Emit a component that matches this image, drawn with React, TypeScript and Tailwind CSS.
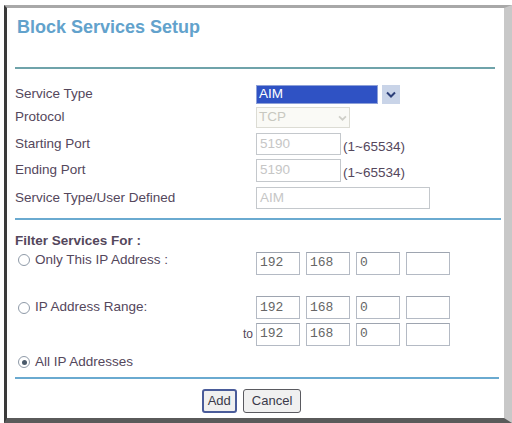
import React from "react";

function Radio({ checked }: { checked?: boolean }) {
  return (
    <span className="w-[12px] h-[12px] rounded-full border border-[#8f9aa8] bg-white flex items-center justify-center shrink-0">
      {checked && <span className="w-[5px] h-[5px] rounded-full bg-[#4a5a6a]" />}
    </span>
  );
}

function IpBox({ value }: { value?: string }) {
  return (
    <div className="w-[44px] h-[23px] border border-[#b4bac4] border-t-[#9ea5b0] bg-white flex items-center px-[3px] font-['Liberation_Mono',monospace] text-[13px] text-[#666]">
      {value}
    </div>
  );
}

function IpRow({ values }: { values: string[] }) {
  return (
    <div className="flex gap-[6px]">
      {values.map((v, i) => (
        <IpBox key={i} value={v} />
      ))}
    </div>
  );
}

export default function App() {
  return (
    <div className="w-[512px] h-[423px] bg-white pt-[5px] pl-[4px] font-['Liberation_Sans',Arial,sans-serif] text-[13.5px] text-[#54475c] overflow-hidden">
      <div className="w-[508px] h-[418px] border-l-[3px] border-l-[#3a3a3a] border-t-[3px] border-t-[#a8a8a8] border-r-[8px] border-r-[#c8c8c8] border-b-[5px] border-b-[#5a5a5a] bg-white pl-[8px] flex flex-col">
        <h1 className="mt-[9px] ml-[2px] text-[18px] leading-[20px] font-bold text-[#62a2cc]">Block Services Setup</h1>

        <div className="mt-[30px] w-[480px] h-[2px] bg-[#6fa3aa]" />

        <div className="mt-[16px] flex items-center h-[19px]">
          <span className="w-[241px]">Service Type</span>
          <div className="flex h-[19px]">
            <div className="w-[122px] bg-[#2f52c4] border border-[#8da0d8] text-white flex items-center px-[2px]">AIM</div>
            <div className="ml-[4px] w-[18px] bg-[#c9d4e8] flex items-center justify-center">
              <svg width="10" height="7" viewBox="0 0 10 7">
                <path d="M1 1.5 L5 5.5 L9 1.5" stroke="#2c3f78" strokeWidth="2" fill="none" />
              </svg>
            </div>
          </div>
        </div>

        <div className="mt-[3px] flex items-center h-[21px]">
          <span className="w-[241px]">Protocol</span>
          <div className="w-[94px] h-[21px] border border-[#dcdcd4] bg-[#fafaf6] flex items-center justify-between px-[2px] text-[#c8c8c0]">
            <span>TCP</span>
            <svg width="9" height="6" viewBox="0 0 10 7">
              <path d="M1 1.5 L5 5.5 L9 1.5" stroke="#cfcfc8" strokeWidth="2" fill="none" />
            </svg>
          </div>
        </div>

        <div className="mt-[5px] flex items-center h-[22px]">
          <span className="w-[241px]">Starting Port</span>
          <div className="w-[85px] h-[22px] border border-[#c4c8cc] flex items-center px-[3px] text-[#c6c6c6]">5190</div>
          <span className="ml-[2px] mt-[6px]">(1~65534)</span>
        </div>

        <div className="mt-[4px] flex items-center h-[23px]">
          <span className="w-[241px]">Ending Port</span>
          <div className="w-[85px] h-[23px] border border-[#c4c8cc] flex items-center px-[3px] text-[#c6c6c6]">5190</div>
          <span className="ml-[2px] mt-[6px]">(1~65534)</span>
        </div>

        <div className="mt-[5px] flex items-center h-[22px]">
          <span className="w-[241px]">Service Type/User Defined</span>
          <div className="w-[174px] h-[22px] border border-[#c4c8cc] flex items-center px-[3px] text-[#c6c6c6]">AIM</div>
        </div>

        <div className="mt-[9px] w-[486px] h-[2px] bg-[#6aaad0]" />

        <div className="mt-[13px] h-[16px] flex items-center font-bold">Filter Services For :</div>

        <div className="mt-[2px] flex items-center h-[24px]">
          <div className="w-[241px] flex items-center gap-[5px] pl-[3px] -mt-[6px]">
            <Radio />
            <span>Only This IP Address :</span>
          </div>
          <IpRow values={["192", "168", "0", ""]} />
        </div>

        <div className="mt-[21px] flex items-center h-[23px]">
          <div className="w-[241px] flex items-center gap-[5px] pl-[3px]">
            <Radio />
            <span>IP Address Range:</span>
          </div>
          <IpRow values={["192", "168", "0", ""]} />
        </div>

        <div className="mt-[3px] flex items-center h-[24px]">
          <div className="w-[241px] flex justify-end pr-[3px] text-[12px]">to</div>
          <IpRow values={["192", "168", "0", ""]} />
        </div>

        <div className="mt-[8px] h-[16px] flex items-center gap-[5px] pl-[3px]">
          <Radio checked />
          <span>All IP Addresses</span>
        </div>

        <div className="mt-[7px] w-[484px] h-[2px] bg-[#6aaad0]" />

        <div className="mt-[10px] flex justify-center gap-[6px] pr-[16px] text-[13px]">
          <button className="h-[24px] px-[4px] rounded-[3px] border-2 border-[#4a5c9a] bg-[#f0f0f0] text-[#3a3a4a]">Add</button>
          <button className="h-[24px] px-[8px] rounded-[3px] border border-[#5a5a60] bg-[#f0f0f0] text-[#3a3a4a]">Cancel</button>
        </div>
      </div>
    </div>
  );
}
